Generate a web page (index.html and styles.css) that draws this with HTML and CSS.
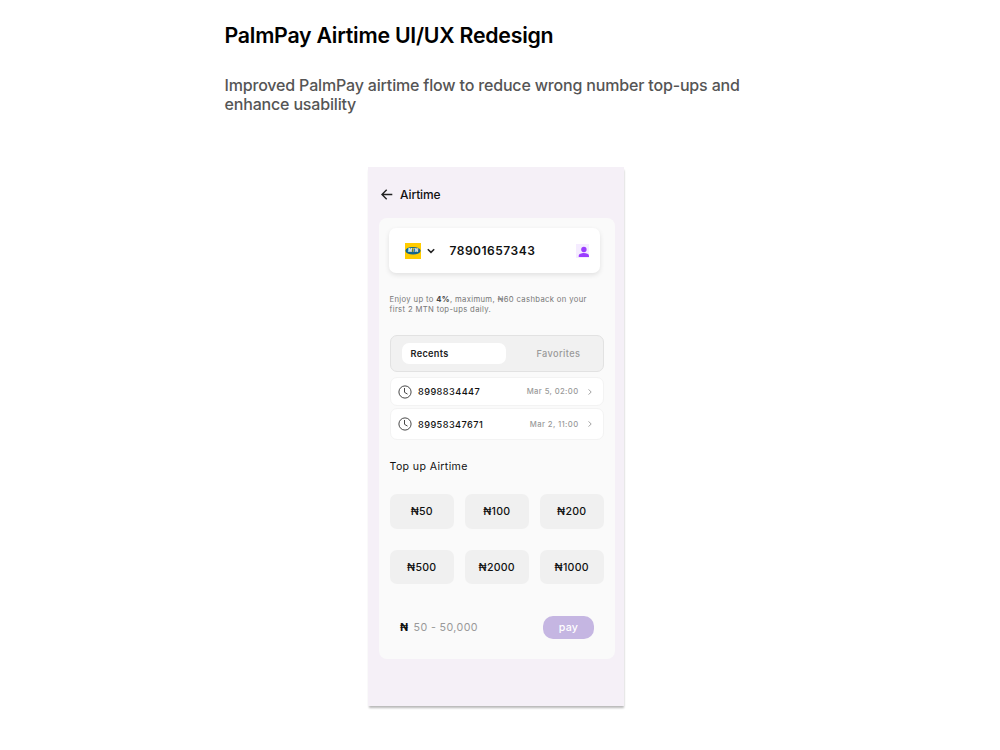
FILE: index.html
```html
<!DOCTYPE html>
<html lang="en">
<head>
  <meta charset="UTF-8">
  <meta name="viewport" content="width=device-width, initial-scale=1.0">
  <title>PalmPay Airtime UI/UX Redesign</title>
  <link rel="stylesheet" href="styles.css">
</head>
<body>
  <!-- Intro -->
  <div class="intro">
    <h1>PalmPay Airtime UI/UX Redesign</h1>
    <p>Improved PalmPay airtime flow to reduce wrong number top-ups and<br>enhance usability</p>
  </div>

  <!-- Phone screen -->
  <div class="phone">
    <div class="topbar">
      <svg width="12" height="12" viewBox="0 0 12 12" fill="none" stroke="#222" stroke-width="1.4">
        <path d="M11.3 5.5H1.2M5.7.8L1 5.5l4.7 4.7"/>
      </svg>
      <span>Airtime</span>
    </div>

    <div class="card">
      <div class="number">
        <svg class="network" width="16" height="16" viewBox="0 0 16 16">
          <rect width="16" height="16" fill="#fc0"/>
          <ellipse cx="8" cy="7.7" rx="7.6" ry="3.8" fill="#13658b"/>
          <text x="7.9" y="9.2" text-anchor="middle" class="network-name">M<tspan fill="#fc0">T</tspan>N</text>
        </svg>
        <svg class="chevron" width="8" height="6" viewBox="0 0 8 6" fill="none" stroke="#222" stroke-width="1.5">
          <path d="M.8 1.2L4 4.4l3.2-3.2"/>
        </svg>
        <span class="phone-number">78901657343</span>
        <svg class="contact" width="13" height="14" viewBox="0 0 13 14">
          <rect width="13" height="14" fill="#f5ecff"/>
          <circle cx="7.9" cy="5.5" r="2.7" fill="#9b3dff"/>
          <path d="M2.7 13v-1.2c0-1.8 2.7-2.8 5.2-2.8s5.1 1 5.1 2.8V13z" fill="#9b3dff"/>
        </svg>
      </div>

      <p class="promo">Enjoy up to <b>4%</b>, maximum, ₦60 cashback on your<br>first 2 MTN top-ups daily.</p>

      <div class="tabs">
        <div class="tab active">Recents</div>
        <div class="tab">Favorites</div>
      </div>

      <!-- Recent numbers -->
      <div class="recent">
        <svg width="14" height="14" viewBox="0 0 14 14" fill="none" stroke="#333" stroke-width=".9">
          <circle cx="7" cy="7" r="6.1"/>
          <path d="M6.5 3v4.3l3 1.8"/>
        </svg>
        <span class="recent-number">8998834447</span>
        <span class="recent-date">Mar 5, 02:00</span>
        <svg class="more" width="4" height="6" viewBox="0 0 4 6" fill="none" stroke="#888" stroke-width=".8">
          <path d="M.6.4L3.2 3 .6 5.6"/>
        </svg>
      </div>
      <div class="recent tall">
        <svg width="14" height="14" viewBox="0 0 14 14" fill="none" stroke="#333" stroke-width=".9">
          <circle cx="7" cy="7" r="6.1"/>
          <path d="M6.5 3v4.3l3 1.8"/>
        </svg>
        <span class="recent-number">89958347671</span>
        <span class="recent-date">Mar 2, 11:00</span>
        <svg class="more" width="4" height="6" viewBox="0 0 4 6" fill="none" stroke="#888" stroke-width=".8">
          <path d="M.6.4L3.2 3 .6 5.6"/>
        </svg>
      </div>

      <h2>Top up Airtime</h2>
      <div class="amounts">
        <button>₦50</button>
        <button>₦100</button>
        <button>₦200</button>
        <button>₦500</button>
        <button>₦2000</button>
        <button>₦1000</button>
      </div>

      <!-- Custom amount -->
      <div class="pay-row">
        <span class="naira">₦</span>
        <span class="range">50 - 50,000</span>
        <button class="pay">pay</button>
      </div>
    </div>
  </div>
</body>
</html>
```
FILE: styles.css
```css
* {
  box-sizing: border-box;
}
body {
  margin: 0;
  min-height: 750px;
  background: #fff;
  font-family: Inter, sans-serif;
  color: #111;
}
h1, h2, p {
  margin: 0;
}
button {
  border: 0;
  padding: 0;
  font-family: inherit;
}
.intro {
  padding: 22px 0 0 224.5px;
  height: 167px;
}
.intro h1 {
  font-size: 21.3px;
  line-height: 26px;
  font-weight: 600;
  letter-spacing: -.23px;
  color: #000;
}
.intro p {
  margin-top: 27.5px;
  font-size: 16px;
  line-height: 19px;
  font-weight: 500;
  letter-spacing: -.17px;
  color: #555;
  white-space: nowrap;
}
.phone {
  width: 256px;
  height: 539px;
  margin-left: 368px;
  padding: 0 9px 0 11px;
  background: #f5f0f7;
  box-shadow: 0 2px 2px -.5px rgba(0, 0, 0, .28);
}
.topbar {
  display: flex;
  align-items: center;
  height: 51px;
  padding: 4px 0 0 2px;
  font-size: 12px;
  font-weight: 500;
  letter-spacing: -.1px;
}
.topbar span {
  margin-left: 7px;
}
.card {
  height: 441px;
  padding: 10px 11px 0 10.5px;
  border-radius: 8px;
  background: #fafafa;
}
.number {
  display: flex;
  align-items: center;
  width: 211px;
  height: 45px;
  margin-left: -.5px;
  padding: 0 11px 0 16px;
  border-radius: 7px;
  background: #fff;
  box-shadow: 0 2px 5px rgba(0, 0, 0, .1);
}
.network-name {
  font-size: 4.2px;
  font-weight: 800;
  font-style: italic;
  fill: #fff;
}
.chevron {
  margin-left: 6px;
}
.phone-number {
  margin-left: 14.5px;
  font-size: 12px;
  font-weight: 600;
  letter-spacing: .5px;
}
.contact {
  margin-left: auto;
}
.promo {
  margin-top: 22px;
  font-size: 7.7px;
  line-height: 10px;
  letter-spacing: .34px;
  color: #777;
  white-space: nowrap;
}
.promo b {
  color: #444;
}
.tabs {
  display: flex;
  align-items: center;
  height: 37px;
  margin-top: 20px;
  padding: 0 11.5px;
  border: 1px solid #e2e2e2;
  border-radius: 7px;
  background: #f1f1f1;
}
.tab {
  flex: 1;
  height: 21px;
  line-height: 21px;
  padding-left: 30.5px;
  font-size: 9.2px;
  font-weight: 500;
  letter-spacing: .4px;
  color: #999;
}
.tab.active {
  flex: none;
  width: 104px;
  padding-left: 8.5px;
  border-radius: 7px;
  background: #fff;
  font-weight: 600;
  letter-spacing: .3px;
  color: #222;
}
.recent {
  display: flex;
  align-items: center;
  height: 29px;
  margin-top: 5px;
  padding: 0 11px 0 7.5px;
  border: 1px solid #f3f3f3;
  border-radius: 7px;
  background: #fff;
}
.recent.tall {
  height: 32px;
  margin-top: 2px;
}
.recent-number {
  margin-left: 6px;
  font-size: 9.2px;
  font-weight: 500;
  letter-spacing: .42px;
}
.recent-date {
  margin-left: auto;
  font-size: 7.7px;
  font-weight: 500;
  letter-spacing: .38px;
  color: #999;
}
.more {
  margin-left: 9.5px;
}
.card h2 {
  margin-top: 20px;
  font-size: 10.6px;
  line-height: 14px;
  font-weight: 400;
  letter-spacing: .37px;
}
.amounts {
  display: grid;
  grid-template-columns: repeat(3, 1fr);
  gap: 21px 10.5px;
  margin-top: 20px;
}
.amounts button {
  height: 34.5px;
  border-radius: 7px;
  background: #f0f0f0;
  font-size: 10.6px;
  font-weight: 500;
  letter-spacing: .25px;
  color: #111;
}
.amounts button:nth-child(n+4) {
  padding-top: 1px;
}
.pay-row {
  display: flex;
  align-items: center;
  height: 23px;
  margin-top: 31.5px;
  padding: 0 10px 0 10.5px;
}
.naira {
  font-size: 10.6px;
  font-weight: 700;
}
.range {
  margin-left: 5.5px;
  font-size: 10.7px;
  letter-spacing: .38px;
  color: #999;
}
.pay {
  width: 51px;
  height: 23px;
  margin-left: auto;
  border-radius: 10px;
  background: #c5b6e2;
  font-size: 10.7px;
  font-weight: 500;
  letter-spacing: .3px;
  color: #fff;
}
```
